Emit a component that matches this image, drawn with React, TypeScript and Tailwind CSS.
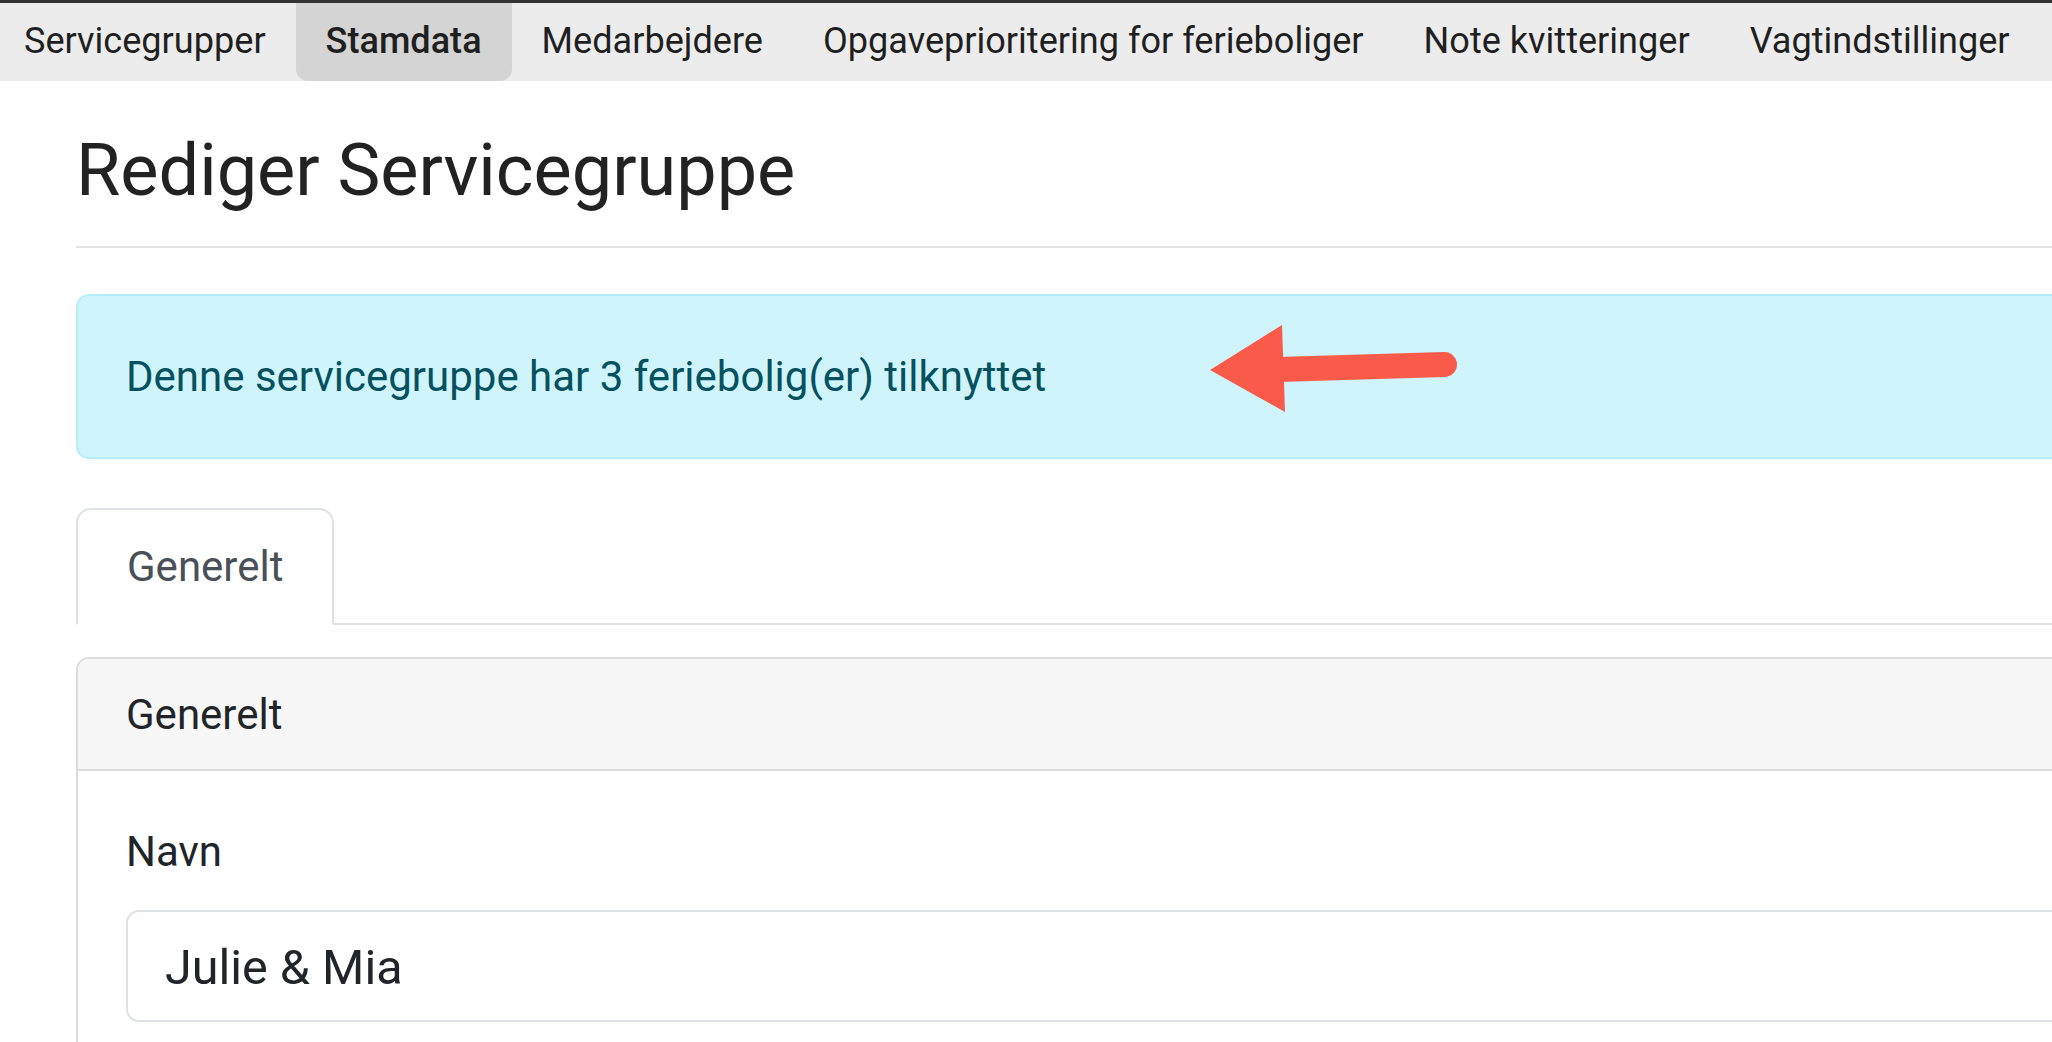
import React from 'react';

const navItems = [
  { label: 'Servicegrupper' },
  { label: 'Stamdata', active: true },
  { label: 'Medarbejdere' },
  { label: 'Opgaveprioritering for ferieboliger' },
  { label: 'Note kvitteringer' },
  { label: 'Vagtindstillinger' },
];

function RedArrow() {
  return (
    <svg
      className="absolute left-[1122px] top-[24px] w-[265px] h-[100px]"
      viewBox="0 0 265 100"
      fill="none"
    >
      <polygon points="10,50 82,5 85,92" fill="#f95a49" />
      <line x1="78" y1="49.5" x2="244.5" y2="44.5" stroke="#f95a49" strokeWidth="25" strokeLinecap="round" />
    </svg>
  );
}

export default function App() {
  return (
    <div className="min-h-screen bg-white overflow-hidden [font-family:Roboto,'Liberation_Sans',sans-serif] text-[#212529]">
      {/* top menu */}
      <div className="border-t-[3px] border-[#333333] bg-[#ececec] h-[81px] flex">
        <div className="flex h-full -ml-[6px]">
          {navItems.map((item) => (
            <div
              key={item.label}
              className={
                item.active
                  ? 'px-[30px] h-full flex items-center pb-[2px] text-[36.1px] text-[#1f1f1f] bg-[#d4d4d4] rounded-b-[12px] font-medium whitespace-nowrap'
                  : 'px-[30px] h-full flex items-center pb-[2px] text-[36.1px] text-[#1f1f1f] whitespace-nowrap'
              }
            >
              {item.label}
            </div>
          ))}
        </div>
      </div>

      <div className="pl-[76px] w-[2400px]">
        <h1 className="mt-[47px] text-[72px] leading-[1.2] font-normal text-[#222222]">Rediger Servicegruppe</h1>
        <hr className="mt-[32px] border-0 border-t-2 border-[#e3e3e3]" />

        <div className="relative mt-[46px] h-[165px] flex items-center pl-[48px] bg-[#cff4fc] border-2 border-[#b6effb] rounded-[13px] text-[42px] text-[#055160]">
          Denne servicegruppe har 3 feriebolig(er) tilknyttet
          <RedArrow />
        </div>

        {/* tabs */}
        <div className="mt-[49px] flex border-b-2 border-[#dee2e6]">
          <div className="w-[258px] h-[117px] -mb-[2px] flex items-center pl-[49px] border-2 border-b-white border-[#dee2e6] rounded-t-[15px] bg-white text-[42px] text-[#495057]">
            Generelt
          </div>
        </div>

        {/* card */}
        <div className="mt-[32px] border-2 border-[#dcdcdc] rounded-[13px] overflow-hidden">
          <div className="h-[112px] flex items-center pl-[48px] bg-[#f7f7f7] border-b-2 border-[#dcdcdc] text-[42px]">
            Generelt
          </div>
          <div className="pl-[48px] pt-[49px] pb-[60px]">
            <label className="block text-[42px] leading-[1.5] mb-[27px]">Navn</label>
            <input
              readOnly
              defaultValue="Julie & Mia"
              className="w-full h-[112px] pl-[37px] pt-[3px] border-2 border-[#dee2e6] rounded-[13px] text-[48.5px] text-[#212529] bg-white outline-none"
            />
          </div>
        </div>
      </div>
    </div>
  );
}
